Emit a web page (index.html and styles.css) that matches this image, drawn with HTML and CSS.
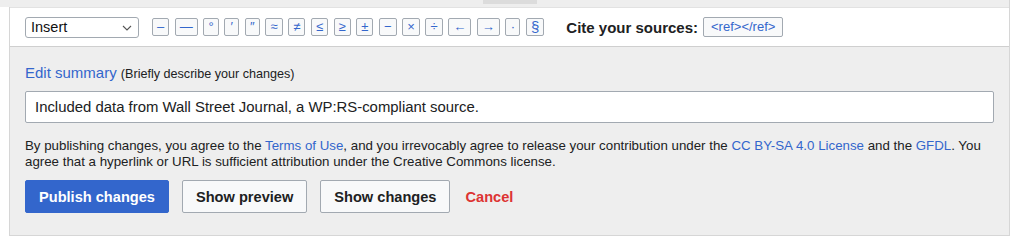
FILE: index.html
```html
<!DOCTYPE html>
<html lang="en">
<head>
<meta charset="utf-8">
<title>Edit options</title>
<link rel="stylesheet" href="styles.css">
</head>
<body>
<div class="editor">
  <div class="grip-strip"><div class="grip"></div></div>
  <div class="toolbar">
    <div class="select">
      <span>Insert</span>
      <svg class="chev" width="10" height="6" viewBox="0 0 10 6"><path d="M1 1 L5 5 L9 1" fill="none" stroke="#555" stroke-width="1.1"/></svg>
    </div>
    <div class="chars">
      <span class="ch">–</span>
      <span class="ch">—</span>
      <span class="ch">°</span>
      <span class="ch">′</span>
      <span class="ch">″</span>
      <span class="ch">≈</span>
      <span class="ch">≠</span>
      <span class="ch">≤</span>
      <span class="ch">≥</span>
      <span class="ch">±</span>
      <span class="ch">−</span>
      <span class="ch">×</span>
      <span class="ch">÷</span>
      <span class="ch">←</span>
      <span class="ch">→</span>
      <span class="ch">·</span>
      <span class="ch sect">§</span>
    </div>
    <span class="cite">Cite your sources:</span>
    <span class="ref">&lt;ref&gt;&lt;/ref&gt;</span>
  </div>
  <div class="options">
    <div class="label"><a class="link">Edit summary</a> <span class="hint">(Briefly describe your changes)</span></div>
    <div class="summary">Included data from Wall Street Journal, a WP:RS-compliant source.</div>
    <p class="legal">By publishing changes, you agree to the <a class="link">Terms of Use</a>, and you irrevocably agree to release your contribution under the <a class="link">CC BY-SA 4.0 License</a> and the <a class="link">GFDL</a>. You agree that a hyperlink or URL is sufficient attribution under the Creative Commons license.</p>
    <div class="actions">
      <button class="btn primary">Publish changes</button>
      <button class="btn">Show preview</button>
      <button class="btn">Show changes</button>
      <a class="cancel">Cancel</a>
    </div>
  </div>
</div>
</body>
</html>
```

FILE: styles.css
```css
* { box-sizing: border-box; }
html, body { margin: 0; padding: 0; background: #fff; }
body {
  font-family: "Liberation Sans", Arial, sans-serif;
  color: #202122;
}
.editor {
  margin-left: 9px;
  width: 1001px;
  background: #eeeeee;
  border-right: 1px solid #d6d6d6;
  border-left: 1px solid #d6d6d6;
  border-bottom: 1px solid #d6d6d6;
}
.grip-strip {
  height: 7px;
  margin-left: -10px;
  padding-left: 10px;
  background: #eeeeee;
  display: flex;
  justify-content: center;
}
.grip {
  width: 54px;
  height: 4px;
  background: #dcdcdc;
}
.toolbar {
  height: 40px;
  background: #fff;
  border-top: 1px solid #e2e2e2;
  border-bottom: 1px solid #cfcfcf;
  display: flex;
  align-items: center;
  padding-left: 15px;
}
.select {
  width: 114px;
  height: 21px;
  border: 1px solid #a2a9b1;
  border-radius: 3px;
  background: #fff;
  display: flex;
  align-items: center;
  justify-content: space-between;
  padding: 0 6px 0 5px;
  font-size: 14.5px;
  color: #111;
}
.chev { margin-top: 1px; }
.chars {
  display: flex;
  gap: 5.6px;
  margin-left: 13px;
}
.ch {
  height: 18px;
  min-width: 15px;
  padding: 0 4px;
  border: 1px solid #a2a9b1;
  border-radius: 2px;
  background: #f8f9fa;
  color: #3366cc;
  font-size: 13px;
  line-height: 16px;
  text-align: center;
}
.ch.sect { font-size: 15px; padding: 0 4px; }
.cite {
  margin-left: 22px;
  font-weight: bold;
  font-size: 15px;
  color: #202122;
}
.ref {
  margin-left: 5px;
  height: 20px;
  padding: 0 7px;
  border: 1px solid #a2a9b1;
  border-radius: 2px;
  background: #f8f9fa;
  color: #3366cc;
  font-size: 13px;
  line-height: 18px;
}
.options {
  padding: 16px 15px 22px 15px;
}
.label {
  font-size: 15px;
  line-height: 20px;
}
.link { color: #3366cc; text-decoration: none; }
.hint { font-size: 12.6px; color: #202122; }
.summary {
  margin-top: 7px;
  height: 32px;
  border: 1px solid #a2a9b1;
  border-radius: 2px;
  background: #fff;
  padding: 0 9px;
  font-size: 14.9px;
  line-height: 30px;
  color: #202122;
}
.legal {
  margin: 15px 0 0 0;
  font-size: 13.3px;
  line-height: 16px;
  color: #202122;
}
.actions {
  margin-top: 10px;
  display: flex;
  align-items: center;
  gap: 13px;
}
.btn {
  height: 33px;
  padding: 0 13px;
  border: 1px solid #a2a9b1;
  border-radius: 2px;
  background: #f8f9fa;
  font-family: "Liberation Sans", Arial, sans-serif;
  font-weight: bold;
  font-size: 14.6px;
  color: #202122;
}
.btn.primary {
  background: #3366cc;
  border-color: #3366cc;
  color: #fff;
  padding: 0 13px;
}
.cancel {
  margin-left: 2px;
  color: #d33;
  font-weight: bold;
  font-size: 14.6px;
}
```
